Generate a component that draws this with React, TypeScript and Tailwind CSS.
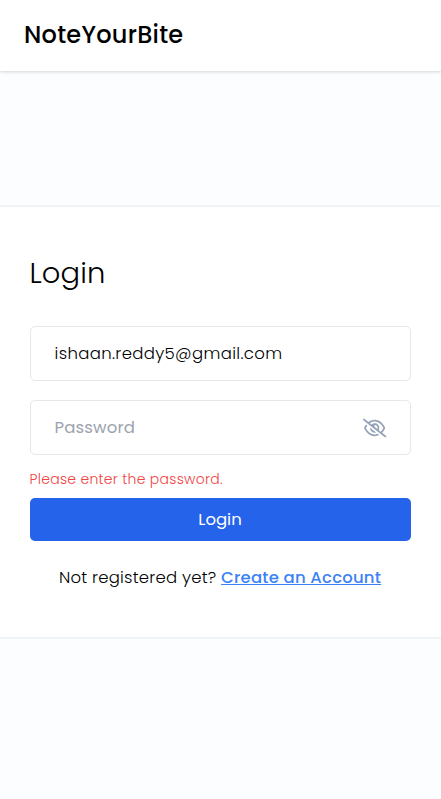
import { FaRegEyeSlash } from "react-icons/fa6";

export default function App() {
  return (
    <div className="flex h-[799px] w-full flex-col overflow-hidden bg-[#fcfdff] font-['Poppins','Inter',sans-serif] text-black">
      <header className="relative flex h-[71px] shrink-0 items-center bg-white pb-0.5 pl-6 shadow-[0_1px_3px_rgba(0,0,0,0.16)]">
        <h1 className="text-[24px] leading-8 font-medium tracking-[0.27px]">NoteYourBite</h1>
      </header>
      <main className="flex grow flex-col pt-[134px]">
        <section className="flex h-[434px] flex-col border-y-2 border-[#f1f4f7] bg-white pr-[30.5px] pl-[29.5px] pt-[48px]">
          <h2 className="h-[36px] text-[29px] leading-9 font-light tracking-[0.1px]">Login</h2>
          <form className="mt-[35px] flex flex-col" onSubmit={(e) => e.preventDefault()}>
            <input
              type="text"
              defaultValue="ishaan.reddy5@gmail.com"
              className="h-[55px] w-full rounded-[5px] border border-gray-200 px-6 text-[16.5px] font-light tracking-[0.35px] outline-none"
            />
            <div className="mt-[19px] flex h-[55px] items-center rounded-[5px] border border-gray-200 pr-[23px] pl-6">
              <input
                type="password"
                placeholder="Password"
                className="min-w-0 grow pt-px text-[16.5px] font-normal tracking-[0.17px] outline-none placeholder:text-[#9ca3af]"
              />
              <FaRegEyeSlash className="size-6 text-[#94a3b8]" />
            </div>
            <p className="mt-[14px] h-5 text-[14px] leading-5 font-light tracking-[0.28px] text-[#ef4444]">
              <span>Please enter the password.</span>
            </p>
            <button className="mt-[9px] h-[43px] rounded-[5px] bg-[#2563eb] pt-px text-[16.5px] text-white">Login</button>
          </form>
          <p className="mt-[25px] text-center text-[16.5px] leading-6 font-light whitespace-nowrap">
            <span className="tracking-[0.22px]">Not registered yet?</span>{" "}
            <a href="#" className="font-medium tracking-[0.2px] text-[#3b82f6] underline">Create an Account</a>
          </p>
        </section>
      </main>
    </div>
  );
}
